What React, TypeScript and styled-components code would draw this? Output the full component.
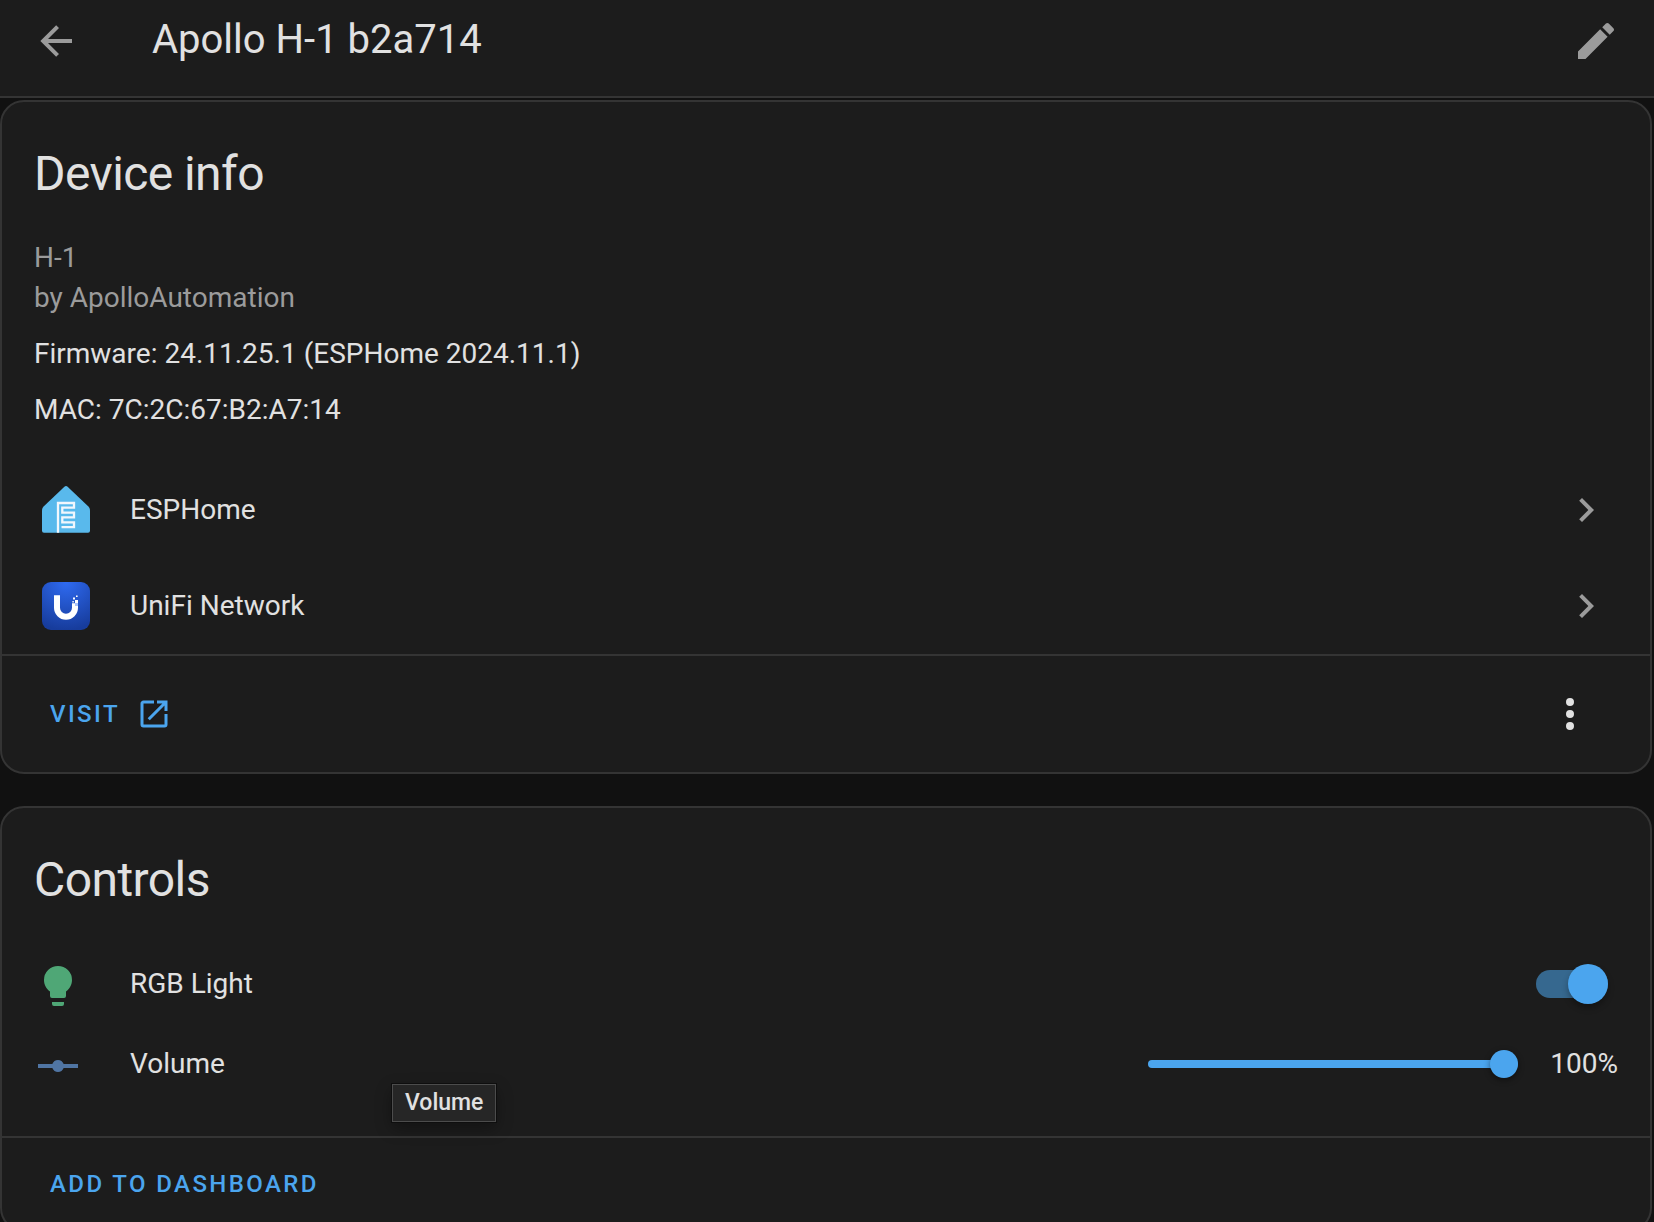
import React, { useState } from "react";
import styled, { createGlobalStyle, ThemeProvider } from "styled-components";

const theme = {
  page: "#111111",
  card: "#1c1c1c",
  divider: "#343434",
  text: "#e1e1e1",
  secondary: "#9b9b9b",
  primary: "#4ba5ee",
  primaryTrack: "#36688f",
  light: "#4fa776",
  idle: "#5075a3",
};

type T = { theme: typeof theme };

const GlobalStyle = createGlobalStyle`
  *, *::before, *::after { box-sizing: border-box; }
  body {
    margin: 0;
    background: #111111;
    font-family: Roboto, "Noto Sans", sans-serif;
    -webkit-font-smoothing: antialiased;
  }
`;

const Shell = styled.div<T>`
  height: 100vh;
  overflow-x: hidden;
  overflow-y: auto;
  scrollbar-width: none;
  background: ${(p) => p.theme.page};
  color: ${(p) => p.theme.text};
  font-size: 28px;
  line-height: 40px;
`;

const Header = styled.header<T>`
  display: flex;
  align-items: center;
  height: 98px;
  padding: 0 34px 14px 32px;
  background: ${(p) => p.theme.card};
  border-bottom: 2px solid ${(p) => p.theme.divider};
`;

const HeaderTitle = styled.h1`
  flex: 1;
  margin: 0 0 0 72px;
  padding-bottom: 2px;
  font-size: 40px;
  line-height: 40px;
  font-weight: 400;
`;

const IconButton = styled.button<T & { $size: number; $muted?: boolean }>`
  display: flex;
  align-items: center;
  justify-content: center;
  width: ${(p) => p.$size}px;
  height: ${(p) => p.$size}px;
  padding: 0;
  border: 0;
  border-radius: 50%;
  background: none;
  color: ${(p) => (p.$muted ? p.theme.secondary : p.theme.text)};
  cursor: pointer;
`;

const Main = styled.main`
  display: flex;
  flex-direction: column;
  gap: 32px;
  padding: 2px 2px 32px 0;
`;

const Card = styled.section<T>`
  background: ${(p) => p.theme.card};
  border: 2px solid ${(p) => p.theme.divider};
  border-radius: 24px;
`;

const CardTitle = styled.h2`
  margin: 0;
  padding: 24px 32px 16px;
  font-size: 48px;
  line-height: 96px;
  font-weight: 400;
  letter-spacing: -0.012em;
`;

const Details = styled.div`
  display: flex;
  flex-direction: column;
  gap: 16px;
  padding: 0 32px 32px;
`;

const Detail = styled.div<T & { $muted?: boolean }>`
  color: ${(p) => (p.$muted ? p.theme.secondary : p.theme.text)};
`;

const IntegrationLink = styled.a<T>`
  display: flex;
  align-items: center;
  gap: 40px;
  height: 96px;
  padding: 0 40px;
  color: ${(p) => p.theme.text};
  text-decoration: none;
`;

const Label = styled.span`
  flex: 1;
`;

const Chevron = styled.span<T>`
  display: flex;
  color: ${(p) => p.theme.secondary};
`;

const Footer = styled.footer<T>`
  display: flex;
  align-items: center;
  justify-content: space-between;
  padding: 10px 32px;
  border-top: 2px solid ${(p) => p.theme.divider};
`;

const TextAction = styled.button<T>`
  display: inline-flex;
  align-items: center;
  gap: 16px;
  height: 72px;
  padding: 0 16px;
  border: 0;
  background: none;
  color: ${(p) => p.theme.primary};
  font-family: inherit;
  font-size: 24px;
  font-weight: 500;
  letter-spacing: 0.1em;
  text-transform: uppercase;
  text-decoration: none;
  cursor: pointer;
`;

const EntityList = styled.div`
  padding-bottom: 32px;
`;

const EntityRow = styled.div`
  position: relative;
  display: flex;
  align-items: center;
  height: 80px;
  padding: 0 32px;
`;

const EntityIcon = styled.span<{ $color: string }>`
  display: flex;
  padding-top: 4px;
  margin-right: 48px;
  color: ${(p) => p.$color};
`;

const EntityName = styled.label`
  flex: 1;
`;

const Switch = styled.input<T>`
  appearance: none;
  display: flex;
  align-items: center;
  width: 72px;
  height: 28px;
  margin: 0 10px;
  border-radius: 14px;
  background: ${(p) => p.theme.divider};
  cursor: pointer;

  &::before {
    content: "";
    width: 40px;
    height: 40px;
    border-radius: 50%;
    background: ${(p) => p.theme.secondary};
    box-shadow: 0 4px 6px rgba(0, 0, 0, 0.3);
  }
  &:checked {
    justify-content: flex-end;
    background: ${(p) => p.theme.primaryTrack};
  }
  &:checked::before {
    background: ${(p) => p.theme.primary};
  }
`;

const Slider = styled.input<T>`
  appearance: none;
  width: 370px;
  height: 28px;
  margin: 0 32px 0 0;
  background: none;
  cursor: pointer;

  &::-webkit-slider-runnable-track {
    height: 8px;
    border-radius: 4px;
    background: linear-gradient(
      to right,
      ${(p) => p.theme.primary} var(--level),
      ${(p) => p.theme.primaryTrack} var(--level)
    );
  }
  &::-webkit-slider-thumb {
    appearance: none;
    width: 28px;
    height: 28px;
    margin-top: -10px;
    border-radius: 50%;
    background: ${(p) => p.theme.primary};
    box-shadow: 0 2px 6px rgba(0, 0, 0, 0.45);
  }
`;

const Tooltip = styled.div`
  position: absolute;
  top: 60px;
  left: 390px;
  z-index: 1;
  padding: 0 12px;
  border: 1px solid #4c4c4c;
  background: #262626;
  box-shadow: 0 0 0 1px #0e0e0e, 0 6px 16px rgba(0, 0, 0, 0.35);
  font-size: 23px;
  line-height: 36px;
  font-weight: 500;
`;

const Icon = ({ d, size = 48 }: { d: string; size?: number }) => (
  <svg width={size} height={size} viewBox="0 0 24 24" fill="currentColor" aria-hidden="true">
    <path d={d} />
  </svg>
);

const icons = {
  back: "M20,11V13H8L13.5,18.5L12.08,19.92L4.16,12L12.08,4.08L13.5,5.5L8,11H20Z",
  pencil:
    "M20.71,7.04C21.1,6.65 21.1,6 20.71,5.63L18.37,3.29C18,2.9 17.35,2.9 16.96,3.29L15.12,5.12L18.87,8.87M3,17.25V21H6.75L17.81,9.93L14.06,6.18L3,17.25Z",
  chevron: "M8.59,16.58L13.17,12L8.59,7.41L10,6L16,12L10,18L8.59,16.58Z",
  open: "M14,3V5H17.59L7.76,14.83L9.17,16.24L19,6.41V10H21V3M19,19H5V5H12V3H5C3.89,3 3,3.9 3,5V19A2,2 0 0,0 5,21H19A2,2 0 0,0 21,19V12H19V19Z",
  dots: "M12,16A2,2 0 0,1 14,18A2,2 0 0,1 12,20A2,2 0 0,1 10,18A2,2 0 0,1 12,16M12,10A2,2 0 0,1 14,12A2,2 0 0,1 12,14A2,2 0 0,1 10,12A2,2 0 0,1 12,10M12,4A2,2 0 0,1 14,6A2,2 0 0,1 12,8A2,2 0 0,1 10,6A2,2 0 0,1 12,4Z",
  bulb: "M12,2A7,7 0 0,0 5,9C5,11.38 6.19,13.47 8,14.74V17A1,1 0 0,0 9,18H15A1,1 0 0,0 16,17V14.74C17.81,13.47 19,11.38 19,9A7,7 0 0,0 12,2M9,21A1,1 0 0,0 10,22H14A1,1 0 0,0 15,21V20H9V21Z",
  rayVertex:
    "M2,11H9.17C9.58,9.83 10.69,9 12,9C13.31,9 14.42,9.83 14.83,11H22V13H14.83C14.42,14.17 13.31,15 12,15C10.69,15 9.58,14.17 9.17,13H2V11Z",
};

const EspHomeLogo = () => (
  <svg width="48" height="48" viewBox="0 0 48 48" aria-hidden="true">
    <path
      d="M22.4 .7Q24-.7 25.6 .7L46.4 20.6Q48 22.2 48 24.4V44.7Q48 46.7 46 46.7H2Q0 46.7 0 44.7V24.4Q0 22.2 1.6 20.6Z"
      fill="#59b9ec"
    />
    <path
      d="M16 46.7V17H32V21.7H20.3V26.7H32V31.3H20.3V36.3H32V41.2H19.5"
      fill="none"
      stroke="#f2f7fd"
      strokeWidth="2.3"
    />
  </svg>
);

const UnifiLogo = () => (
  <svg width="48" height="48" viewBox="0 0 48 48" aria-hidden="true">
    <defs>
      <radialGradient id="unifi" cx="50%" cy="0%" r="100%">
        <stop offset="0" stopColor="#2f6bf2" />
        <stop offset="1" stopColor="#173c9c" />
      </radialGradient>
    </defs>
    <rect width="48" height="48" rx="9" fill="url(#unifi)" />
    <path
      d="M12 13.3H18V25.7A6 6 0 0 0 30 25.7V21.3H33V24H36V25.7A12 12 0 0 1 12 25.7Z"
      fill="#fff"
    />
    <path d="M33 18h3v3h-3zM31 15.5h2v2h-2zM34 13.4h1.6v1.6H34zM30.4 19h1.4v1.4h-1.4z" fill="#fff" />
    <path d="M33 21h3v3h-3z" fill="#a9c3fa" />
  </svg>
);

export default function App() {
  const [lightOn, setLightOn] = useState(true);
  const [volume, setVolume] = useState(100);

  return (
    <ThemeProvider theme={theme}>
      <GlobalStyle />
      <Shell>
        <Header>
          <IconButton $size={48} $muted aria-label="Back">
            <Icon d={icons.back} />
          </IconButton>
          <HeaderTitle>Apollo H-1 b2a714</HeaderTitle>
          <IconButton $size={48} $muted aria-label="Edit">
            <Icon d={icons.pencil} />
          </IconButton>
        </Header>

        <Main>
          <Card>
            <CardTitle>Device info</CardTitle>
            <Details>
              <Detail $muted>
                H-1
                <br />
                by ApolloAutomation
              </Detail>
              <Detail>Firmware: 24.11.25.1 (ESPHome 2024.11.1)</Detail>
              <Detail>MAC: 7C:2C:67:B2:A7:14</Detail>
            </Details>
            <IntegrationLink href="#esphome">
              <EspHomeLogo />
              <Label>ESPHome</Label>
              <Chevron>
                <Icon d={icons.chevron} />
              </Chevron>
            </IntegrationLink>
            <IntegrationLink href="#unifi">
              <UnifiLogo />
              <Label>UniFi Network</Label>
              <Chevron>
                <Icon d={icons.chevron} />
              </Chevron>
            </IntegrationLink>
            <Footer>
              <TextAction as="a" href="#visit">
                Visit
                <Icon d={icons.open} size={36} />
              </TextAction>
              <IconButton $size={96} aria-label="More options">
                <Icon d={icons.dots} />
              </IconButton>
            </Footer>
          </Card>

          <Card>
            <CardTitle>Controls</CardTitle>
            <EntityList>
              <EntityRow>
                <EntityIcon $color={theme.light}>
                  <Icon d={icons.bulb} />
                </EntityIcon>
                <EntityName htmlFor="rgb-light">RGB Light</EntityName>
                <Switch
                  id="rgb-light"
                  type="checkbox"
                  role="switch"
                  checked={lightOn}
                  onChange={(e) => setLightOn(e.target.checked)}
                />
              </EntityRow>
              <EntityRow>
                <EntityIcon $color={theme.idle}>
                  <Icon d={icons.rayVertex} />
                </EntityIcon>
                <EntityName htmlFor="volume">Volume</EntityName>
                <Slider
                  id="volume"
                  type="range"
                  min={0}
                  max={100}
                  value={volume}
                  style={{ "--level": `${volume}%` } as React.CSSProperties}
                  onChange={(e) => setVolume(Number(e.target.value))}
                />
                <span>{volume}%</span>
                <Tooltip role="tooltip">Volume</Tooltip>
              </EntityRow>
            </EntityList>
            <Footer>
              <TextAction type="button">Add to dashboard</TextAction>
            </Footer>
          </Card>
        </Main>
      </Shell>
    </ThemeProvider>
  );
}
